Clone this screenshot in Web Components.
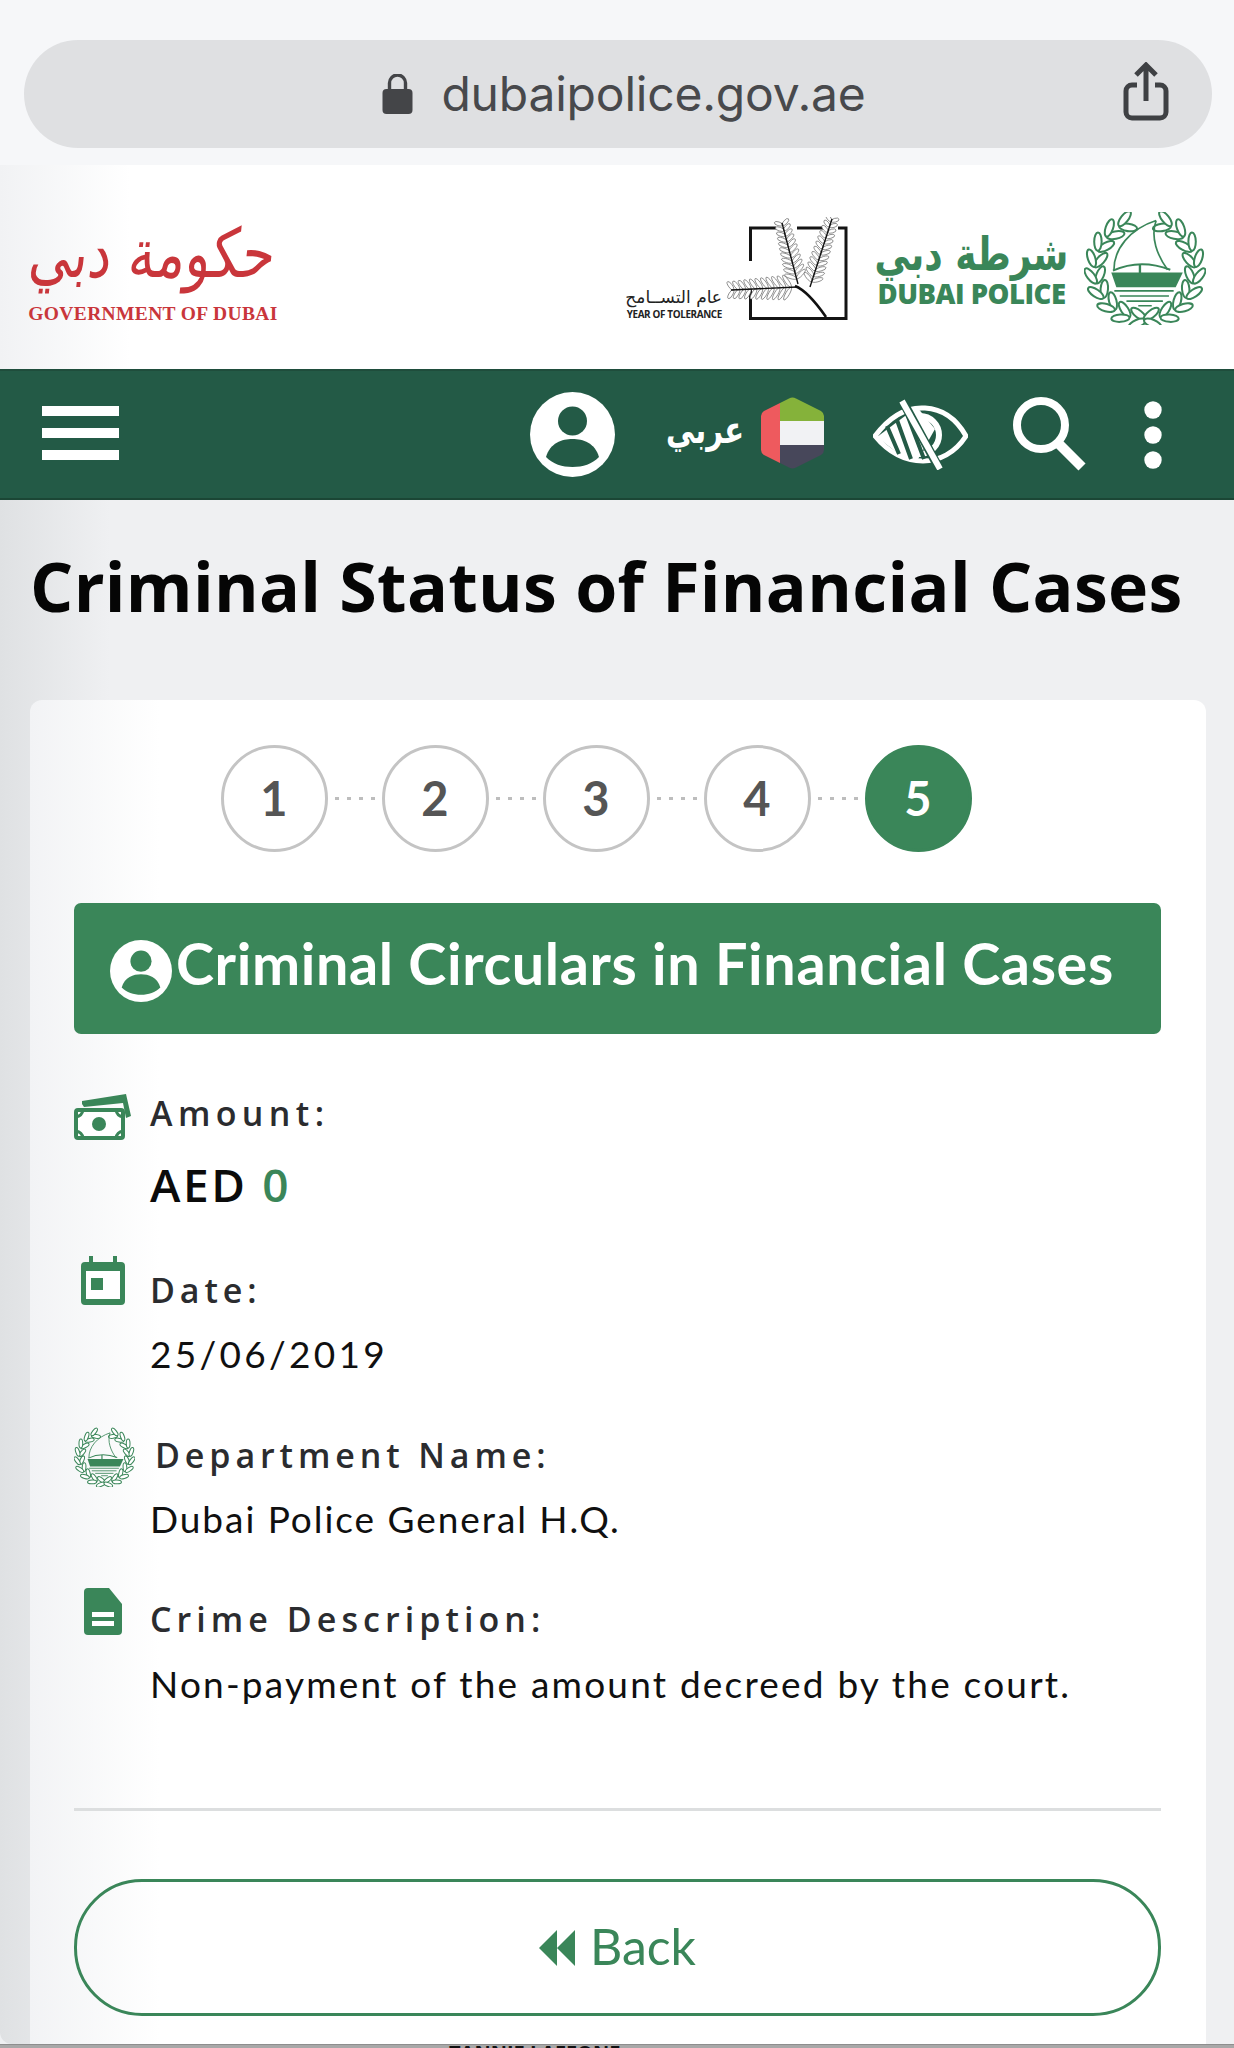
<!DOCTYPE html>
<html lang="en">
<head>
<meta charset="utf-8">
<title>Criminal Status of Financial Cases</title>
<style>
html,body{margin:0;padding:0;height:2048px;overflow:hidden;background:#eff0f2}
body{display:flex;flex-direction:column;font-family:"Open Sans","Liberation Sans",sans-serif}
</style>
</head>
<body>
<dp-browser-bar>dubaipolice.gov.ae</dp-browser-bar>
<dp-site-header></dp-site-header>
<dp-nav></dp-nav>
<dp-page heading="Criminal Status of Financial Cases">
  <dp-stepper>
    <dp-step>1</dp-step><dp-step>2</dp-step><dp-step>3</dp-step><dp-step>4</dp-step><dp-step active>5</dp-step>
  </dp-stepper>
  <dp-banner>Criminal Circulars in Financial Cases</dp-banner>
  <dp-field label="Amount:" icon="money" style="--gap:13px;--after:48px;--first:49px;--lsp:5.4px">
    <span style="font-size:46px;font-weight:600;color:#0b0b0b;line-height:56px;letter-spacing:2.6px;font-family:'Open Sans',sans-serif">AED <span style="color:#3a8659">0</span></span>
  </dp-field>
  <dp-field label="Date:" icon="calendar" style="--gap:10px;--after:47px;--vsp:3.3px">25/06/2019</dp-field>
  <dp-field label="Department Name:" icon="crest" style="--gap:10px;--after:46px;--shift:5px;--lsp:4.9px;--vsp:1.95px">Dubai Police General H.Q.</dp-field>
  <dp-field label="Crime Description:" icon="doc" style="--gap:11px;--after:171px;--lsp:5.05px;--vsp:2.2px">Non-payment of the amount decreed by the court.</dp-field>
  <dp-back-button>Back</dp-back-button>
</dp-page>
<dp-strip>Tannie Laffone</dp-strip>

<script>
const GREEN='#3a8659';
function define(name,html,init){
  customElements.define(name,class extends HTMLElement{
    constructor(){super();this.attachShadow({mode:'open'});}
    connectedCallback(){
      this.shadowRoot.innerHTML=typeof html==='function'?html(this):html;
      if(init)init(this);
    }
  });
}
function crestLeaves(){
  let s='';
  const cx=225,cy=205,N=9;
  for(const side of [-1,1]){
    for(let i=0;i<N;i++){
      const a=(98+i*(150/(N-1)))*Math.PI/180;
      const R=148;
      const x=cx+side*(-Math.cos(a))*R, y=cy+Math.sin(a)*R;
      const tang=Math.atan2(Math.cos(a),side*Math.sin(a))*180/Math.PI;
      for(const off of [-1,1]){
        const nx=side*(-Math.cos(a)),ny=Math.sin(a);
        const lx=x+nx*off*14,ly=y+ny*off*14;
        const rot=tang+off*side*30;
        s+=`<ellipse cx="${lx.toFixed(1)}" cy="${ly.toFixed(1)}" rx="27" ry="11" transform="rotate(${rot.toFixed(1)} ${lx.toFixed(1)} ${ly.toFixed(1)})"/>`;
      }
    }
  }
  return s;
}
const CREST_SVG=`<svg viewBox="45 35 360 335" width="100%" height="100%" style="display:block">
  <g fill="#fff" stroke="${GREEN}" stroke-width="6">${crestLeaves()}</g>
  <path d="M258 60C180 85 132 145 133 208M258 60C240 110 262 165 292 206" fill="none" stroke="${GREEN}" stroke-width="5"/>
  <path d="M130 209Q210 172 300 206" fill="none" stroke="${GREEN}" stroke-width="6"/>
  <path d="M210 190V216" stroke="${GREEN}" stroke-width="7"/>
  <path d="M125 214H337L316 258H140Z" fill="${GREEN}"/>
  <path d="M134 269H310M150 284H296M170 299H278M205 313H245" stroke="${GREEN}" stroke-width="5"/>
</svg>`;
define('dp-crest',`<style>:host{display:block;width:100%;height:100%}</style>${CREST_SVG}`);

define('dp-browser-bar',`<style>
:host{display:block;height:165px;box-sizing:border-box;padding:40px 22px 17px 24px;background:#f6f7f9;flex:none}
.pill{height:108px;border-radius:54px;background:#dfe0e2;display:grid;grid-template-columns:1fr auto 1fr;align-items:center}
.addr{display:flex;align-items:center;gap:28px;grid-column:2;font:400 48px/1 Inter,"Liberation Sans",sans-serif;color:#48494c;letter-spacing:-.2px;margin-left:12px}
.share{justify-self:end;margin:-4px 43px 0 0;display:block}
</style><div class="pill"><div class="addr">
<svg width="31" height="40" viewBox="0 0 30 40"><rect x="0" y="15" width="30" height="25" rx="4" fill="#444548"/><path d="M7 16V9a8 8 0 0 1 16 0v7" fill="none" stroke="#444548" stroke-width="3.4"/></svg>
<span><slot></slot></span></div>
<svg class="share" width="46" height="60" viewBox="0 0 46 60" fill="none" stroke="#3f4144" stroke-width="5"><path d="M14 23H9a6 6 0 0 0-6 6v21a6 6 0 0 0 6 6h28a6 6 0 0 0 6-6V29a6 6 0 0 0-6-6h-5"/><path d="M23 39V4M13 13 23 3l10 10"/></svg>
</div>`);

define('dp-gov-logo',`<style>
:host{display:flex;flex-direction:column;align-items:center;width:250px;color:#c9363b}
.ar{font:400 68px/84px "DejaVu Sans",sans-serif;height:84px;white-space:nowrap;transform:translateY(-6px) skewX(-6deg) scaleX(.78);transform-origin:center;display:block}
.en{font:700 19.5px/20px "Liberation Serif",serif;letter-spacing:.35px;white-space:nowrap;margin-top:2px}
</style><span class="ar" dir="rtl" lang="ar">حكومة دبي</span><span class="en">GOVERNMENT OF DUBAI</span>`);

function frond(x1,y1,x2,y2,n,len){
  let s='';
  const ang=Math.atan2(y2-y1,x2-x1);
  for(let i=1;i<=n;i++){
    const t=i/(n+.4),x=x1+(x2-x1)*t,y=y1+(y2-y1)*t;
    const l=len*(1-.35*t);
    for(const o of [-1,1]){
      const a=ang+o*1.0;
      const cx=x+Math.cos(a)*l/2,cy=y+Math.sin(a)*l/2;
      s+=`<ellipse cx="${cx.toFixed(1)}" cy="${cy.toFixed(1)}" rx="${(l/2).toFixed(1)}" ry="1.9" transform="rotate(${(a*180/Math.PI).toFixed(0)} ${cx.toFixed(1)} ${cy.toFixed(1)})"/>`;
    }
  }
  return `<g fill="#fff" stroke="#555" stroke-width=".6">${s}</g><path d="M${x1} ${y1}L${x2} ${y2}" stroke="#111" stroke-width="1.4"/>`;
}
define('dp-tolerance-logo',`<style>
:host{display:flex;align-items:flex-end;gap:3px}
.t{display:flex;flex-direction:column;align-items:flex-end;width:97px;color:#222;padding-bottom:3px}
.ar{font:400 17px/22px "DejaVu Sans",sans-serif;white-space:nowrap}
.en{font:700 9.9px/12px "Open Sans",sans-serif;white-space:nowrap;letter-spacing:-.35px}
svg{display:block}
</style><div class="t"><span class="ar" dir="rtl" lang="ar">عام التســامح</span><span class="en">YEAR OF TOLERANCE</span></div>
<svg width="127" height="106" viewBox="725 218 127 106">
<path d="M776 229H750.500V319.500H846V229H838M826 229H797" fill="none" stroke="#141414" stroke-width="3"/>
<path d="M751 290V262" stroke="#fff" stroke-width="6"/>
${frond(797,288,731,291,11,15)}${frond(798,285,782,224,11,13)}${frond(810,288,832,220,12,12)}
<path d="M795 287Q808 292 826 318" fill="none" stroke="#111" stroke-width="2.6"/>
</svg>`);

define('dp-police-logo',`<style>
:host{display:flex;align-items:center;gap:17px;color:${GREEN}}
.t{display:flex;flex-direction:column;align-items:center;width:191px}
.ar{font:700 46px/52px "DejaVu Sans",sans-serif;white-space:nowrap;height:52px;transform:scaleX(.78);width:191px;display:flex;justify-content:center}
.en{font:800 27.5px/30px "Open Sans",sans-serif;white-space:nowrap;margin-top:-1px;letter-spacing:-.5px}
.c{width:122px;height:113px}
</style><div class="t"><span class="ar" dir="rtl" lang="ar">شرطة دبي</span><span class="en">DUBAI POLICE</span></div><div class="c"><dp-crest></dp-crest></div>`);

define('dp-site-header',`<style>
:host{display:flex;align-items:center;justify-content:space-between;height:204px;flex:none;box-sizing:border-box;padding:0 28px 0 28px;background:linear-gradient(to right,#f1f2f4,#fff 130px)}
.gov{margin-top:8px}
.right{display:flex;align-items:center;gap:24px;margin-top:2px}
.tol{margin-top:4px}
</style><dp-gov-logo class="gov"></dp-gov-logo><div class="right"><dp-tolerance-logo class="tol"></dp-tolerance-logo><dp-police-logo></dp-police-logo></div>`);

define('dp-nav',`<style>
:host{display:flex;align-items:center;justify-content:space-between;height:131px;flex:none;box-sizing:border-box;background:#235a46;border-top:2px solid #1f4d3c;border-bottom:2px solid #1b4635;padding:0 72px 0 42px}
.burger{display:flex;flex-direction:column;gap:12px;margin-top:-4px}
.burger i{display:block;width:77px;height:10px;background:#fff}
.right{display:flex;align-items:center}
svg{display:block;flex:none}
.ar{font:700 29px/1 "DejaVu Sans",sans-serif;color:#fff;width:74px;margin:-8px 17px 0 55px;white-space:nowrap;text-align:center;transform:scaleY(1.3)}
.flag{margin-top:-4px}
.eye{margin-left:49px}.search{margin-left:45px;margin-top:-2px}.dots{margin-left:57px}
</style>
<div class="burger"><i></i><i></i><i></i></div>
<div class="right">
<svg width="85" height="85" viewBox="0 0 85 85"><circle cx="42.500" cy="42.500" r="42.500" fill="#fff"/><circle cx="42.500" cy="29" r="14.500" fill="#235a46"/><path d="M16 65C20 51 32 47 42.500 47S65 51 69 65C62 72 53 75 42.500 75S23 72 16 65Z" fill="#235a46"/></svg>
<span class="ar" dir="rtl" lang="ar">عربي</span>
<svg class="flag" width="63" height="72" viewBox="0 0 63 72"><defs><clipPath id="hex"><path d="M28 1.500Q31.500-.5 35 1.500L60 14Q63 16 63 19V53Q63 56 60 58L35 70.500Q31.500 72.500 28 70.500L3 58Q0 56 0 53V19Q0 16 3 14Z"/></clipPath></defs><g clip-path="url(#hex)"><rect x="19" width="44" height="24" fill="#85b23a"/><rect x="19" y="24" width="44" height="24" fill="#f1f2f4"/><rect x="19" y="48" width="44" height="24" fill="#47475a"/><rect width="19" height="72" fill="#ee5a5e"/></g></svg>
<svg class="eye" width="95" height="71" viewBox="0 0 95 71" fill="none" stroke="#fff"><path d="M2 37C20 13 38 8 52 9C70 10 84 21 93 37C82 54 66 62 50 62C33 62 16 54 2 37Z" stroke-width="5"/><circle cx="47" cy="36" r="19" stroke-width="6"/><path d="M4 38 44 8 62 30 44 62 32 60Z" fill="#fff" stroke="none"/><path d="M14 27 26 55M24 21 38 60M34 15 51 60" stroke="#235a46" stroke-width="4"/><path d="M29 1 67 71" stroke="#235a46" stroke-width="9"/><path d="M29 2 67 70" stroke-width="6"/></svg>
<svg class="search" width="74" height="74" viewBox="0 0 74 74" fill="none" stroke="#fff"><circle cx="28" cy="28" r="24" stroke-width="8"/><path d="M45 46 69 70" stroke-width="10"/></svg>
<svg class="dots" width="18" height="68" viewBox="0 0 18 68" fill="#fff"><circle cx="9" cy="9" r="8.700"/><circle cx="9" cy="34" r="8.700"/><circle cx="9" cy="59" r="8.700"/></svg>
</div>`);

define('dp-page',h=>`<style>
:host{display:block;flex:1;min-height:0;overflow:hidden;background:linear-gradient(to right,#dfe1e3,#eff0f2 110px);border-radius:0 0 12px 12px;box-sizing:border-box;padding:0 28px 0 30px}
h1{margin:0;padding:42px 0 70px;font:700 68px/88px "Open Sans",sans-serif;color:#050505;white-space:nowrap;letter-spacing:.3px}
.card{background:linear-gradient(to right,#f2f3f5,#fff 130px);border-radius:12px;box-sizing:border-box;height:1400px;padding:45px 45px 0 44px}
</style><h1>${h.getAttribute('heading')}</h1><div class="card"><slot></slot></div>`);

define('dp-stepper',`<style>:host{display:flex;justify-content:center;align-items:center;margin-bottom:51px;padding-right:43px}</style><slot></slot>`);
define('dp-step',`<style>
:host{display:flex;align-items:center;font:700 47px/1 Lato,"Open Sans",sans-serif;color:#555}
:host(:not(:first-of-type))::before{content:"";display:block;width:40px;height:3px;margin:0 7px;background:repeating-linear-gradient(to right,#bdbdbd 0 4px,transparent 4px 12px)}
.c{width:107px;height:107px;box-sizing:border-box;border:3px solid #c4c4c4;border-radius:50%;display:flex;align-items:center;justify-content:center;background:#fff}
:host([active]) .c{background:${GREEN};border-color:${GREEN};color:#fff}
</style><div class="c"><slot></slot></div>`);

define('dp-banner',`<style>
:host{display:flex;align-items:center;gap:4px;height:131px;box-sizing:border-box;padding:0 36px;background:${GREEN};border-radius:7px;color:#fff;font:700 57.500px/1 Lato,"Open Sans",sans-serif;white-space:nowrap;letter-spacing:.63px}
svg{display:block;flex:none;margin-top:4px}
span{margin-top:-11px}
</style><svg width="62" height="62" viewBox="0 0 85 85"><circle cx="42.500" cy="42.500" r="42.500" fill="#fff"/><circle cx="42.500" cy="29" r="14.500" fill="${GREEN}"/><path d="M16 65C20 51 32 47 42.500 47S65 51 69 65C62 72 53 75 42.500 75S23 72 16 65Z" fill="${GREEN}"/></svg><span><slot></slot></span>`);

const ICONS={
 money:`<svg width="58" height="46" viewBox="0 0 58 46"><path d="M8 10 8 7 52 0 57 22 52 24 49 9 10 13Z" fill="${GREEN}"/><rect x="2" y="16" width="47" height="28" rx="2" fill="#fff" stroke="${GREEN}" stroke-width="4"/><path d="M2 23Q8 22 9 16M49 23Q43 22 42 16M2 37Q8 38 9 44M49 37Q43 38 42 44" fill="none" stroke="${GREEN}" stroke-width="3"/><circle cx="25" cy="30" r="7" fill="${GREEN}"/></svg>`,
 calendar:`<svg width="44" height="49" viewBox="0 0 44 49"><path d="M8 0h4v6H32V0h4V6h4a4 4 0 0 1 4 4V45a4 4 0 0 1-4 4H4a4 4 0 0 1-4-4V10a4 4 0 0 1 4-4H8Z" fill="${GREEN}"/><rect x="5" y="15" width="34" height="28" fill="#fff"/><rect x="10" y="22" width="12" height="12" fill="${GREEN}"/></svg>`,
 crest:`<div style="width:61px;height:60px"><dp-crest></dp-crest></div>`,
 doc:`<svg width="38" height="47" viewBox="0 0 38 47"><path d="M4 0H25L38 16V43a4 4 0 0 1-4 4H4a4 4 0 0 1-4-4V4a4 4 0 0 1 4-4Z" fill="${GREEN}"/><path d="M8 24H30V29H8ZM8 33H30V38H8Z" fill="#fff"/></svg>`
};
const ICON_POS={money:'margin:11px 0 0 0',calendar:'margin:-4px 0 0 7px',crest:'margin:2px 0 0 0',doc:'margin:-1px 0 0 10px'};
define('dp-field',h=>{
 const ic=h.getAttribute('icon');
 return `<style>
:host{display:grid;grid-template-columns:76px 1fr;margin-top:var(--first,0);margin-bottom:var(--after,46px);font:400 37px/48px Lato,"Open Sans",sans-serif;color:#101010;letter-spacing:var(--vsp,2.4px)}
.i{height:60px;display:flex;align-items:flex-start}
.l{height:60px;line-height:60px;font-weight:600;font-family:"Open Sans",sans-serif;font-size:34px;letter-spacing:var(--lsp,4.9px);color:#2b2c2f;padding-left:var(--shift,0)}
.v{grid-column:2;margin-top:var(--gap,10px)}
</style><div class="i"><div style="${ICON_POS[ic]}">${ICONS[ic]}</div></div><div class="l">${h.getAttribute('label')}</div><div class="v"><slot></slot></div>`;
});

define('dp-back-button',`<style>
:host{display:flex;align-items:center;justify-content:center;gap:15px;height:137px;box-sizing:border-box;border:3px solid ${GREEN};border-radius:68px;color:${GREEN};font:400 50px/1 Lato,"Open Sans",sans-serif;position:relative}
:host::before{content:"";position:absolute;left:-3px;right:-3px;top:-74px;height:3px;background:#dcdedf}
svg{display:block;margin-top:1px}
span{margin-top:-4px}
</style><svg width="36" height="36" viewBox="0 0 36 36" fill="${GREEN}"><path d="M18 0V36L0 18ZM36 0V36L18 18Z"/></svg><span><slot></slot></span>`);

define('dp-strip',`<style>
:host{display:block;height:4px;flex:none;overflow:hidden;background:#a8a8a8;padding-left:449px;box-sizing:border-box;border-top:1px solid #8e8e8e}
span{display:block;font:700 20px/20px "Open Sans",sans-serif;color:#111;text-transform:uppercase;white-space:nowrap;margin-top:-2px}
</style><span><slot></slot></span>`);
</script>
</body>
</html>
